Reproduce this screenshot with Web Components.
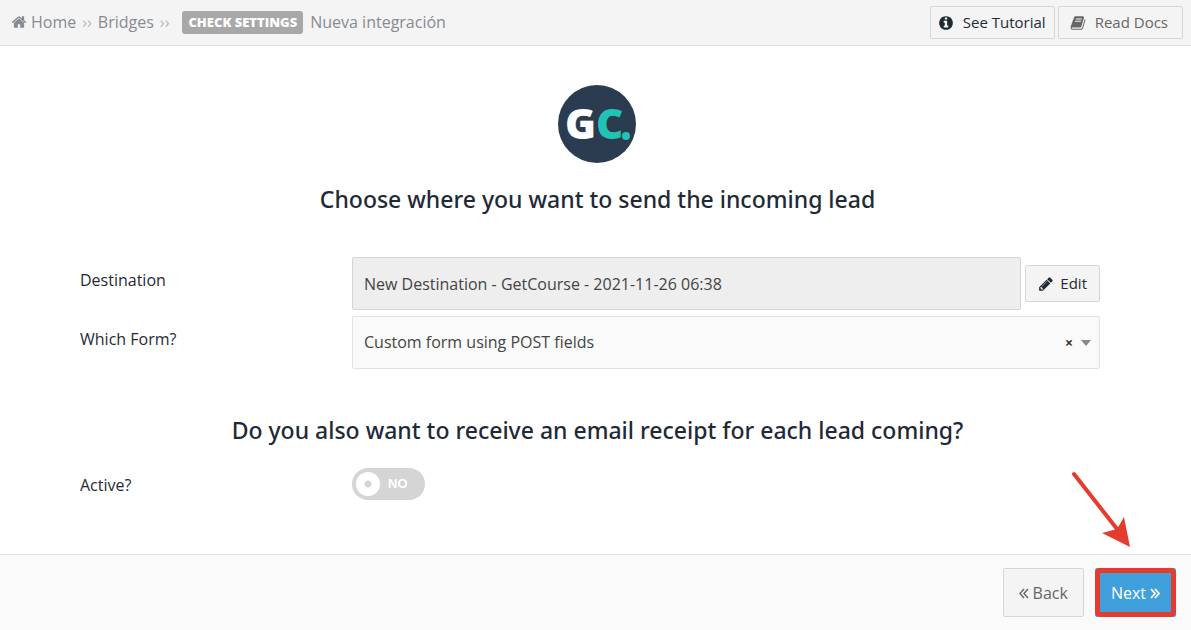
<!DOCTYPE html>
<html lang="en">
<head>
<meta charset="utf-8">
<meta name="viewport" content="width=device-width, initial-scale=1">
<title>Bridges - Nueva integración</title>
<style>
  body { margin: 0; background: #fff; color: #1f2a37; font: 16px/24px "Open Sans", "Noto Sans", sans-serif; }
</style>
</head>
<body>
<bridge-page>
  <crumb-trail slot="header"></crumb-trail>
  <ui-button slot="actions" icon="info" size="small">See Tutorial</ui-button>
  <ui-button slot="actions" icon="book" size="small" tone="muted">Read Docs</ui-button>

  <brand-logo></brand-logo>
  <section-title>Choose where you want to send the incoming lead</section-title>
  <destination-field></destination-field>
  <form-field></form-field>
  <section-title class="second">Do you also want to receive an email receipt for each lead coming?</section-title>
  <switch-field></switch-field>

  <ui-button slot="footer" icon="left" size="large" tone="muted">Back</ui-button>
  <callout-mark slot="footer"><ui-button icon="right" size="large" tone="primary">Next</ui-button></callout-mark>
</bridge-page>

<script>
const define = (name, html, setup) => customElements.define(name, class extends HTMLElement {
  connectedCallback() {
    if (this.shadowRoot) return;
    const t = document.createElement('template');
    t.innerHTML = html;
    this.attachShadow({ mode: 'open' }).append(t.content.cloneNode(true));
    if (setup) setup(this, this.shadowRoot);
  }
});

const glyphs = {
  home: 'M1472 992v480q0 26-19 45t-45 19h-384v-384h-256v384h-384q-26 0-45-19t-19-45v-480q0-1 .5-3t.5-3l575-474 575 474q1 2 1 6zm223-69l-62 74q-8 9-21 11h-3q-13 0-21-7l-692-577-692 577q-12 8-24 7-13-2-21-11l-62-74q-8-10-7-23.5t11-21.5l719-599q32-26 76-26t76 26l244 204v-195q0-14 9-23t23-9h192q14 0 23 9t9 23v408l219 182q10 8 11 21.5t-7 23.5z',
  info: 'M1152 1376v-160q0-14-9-23t-23-9h-96v-512q0-14-9-23t-23-9h-320q-14 0-23 9t-9 23v160q0 14 9 23t23 9h96v320h-96q-14 0-23 9t-9 23v160q0 14 9 23t23 9h448q14 0 23-9t9-23zm-128-896v-160q0-14-9-23t-23-9h-192q-14 0-23 9t-9 23v160q0 14 9 23t23 9h192q14 0 23-9t9-23zm640 416q0 209-103 385.5t-279.5 279.5-385.5 103-385.5-103-279.5-279.5-103-385.5 103-385.5 279.5-279.5 385.5-103 385.5 103 279.5 279.5 103 385.5z',
  pencil: 'M491 1536l91-91-235-235-91 91v107h128v128h107zm523-928q0-22-22-22-10 0-17 7l-542 542q-7 7-7 17 0 22 22 22 10 0 17-7l542-542q7-7 7-17zm-54-192l416 416-832 832h-416v-416zm683 96q0 53-37 90l-166 166-416-416 166-165q36-38 90-38 53 0 91 38l235 234q37 39 37 91z',
  book: 'M1703 478q40 57 18 129l-275 906q-19 64-76.5 107.5t-122.5 43.5h-923q-77 0-148.5-53.5t-99.5-131.5q-24-67-2-127 0-4 3-27t4-37q1-8-3-21.5t-3-19.5q2-11 8-21t16.5-23.5 16.5-23.5q23-38 45-91.5t30-91.5q3-10 .5-30t-.5-28q3-11 17-28t17-23q21-36 42-92t25-90q1-9-2.5-32t.5-28q4-13 22-30.5t22-22.5q19-26 42.5-84.5t27.5-96.5q1-8-3-25.5t-2-26.5q2-8 9-18t18-23 17-21q8-12 16.5-30.5t15-35 16-36 19.5-32 26.5-23.5 36-11.5 47.5 5.5l-1 3q38-9 51-9h761q74 0 114 56t18 130l-274 906q-36 119-71.5 153.5t-128.5 34.5h-869q-27 0-38 15-11 16-1 43 24 70 144 70h923q29 0 56-15.5t35-41.5l300-987q7-22 5-57 38 15 59 43zm-1064 2q-4 13 2 22.5t20 9.5h608q13 0 25.5-9.5t16.5-22.5l21-64q4-13-2-22.5t-20-9.5h-608q-13 0-25.5 9.5t-16.5 22.5zm-83 256q-4 13 2 22.5t20 9.5h608q13 0 25.5-9.5t16.5-22.5l21-64q4-13-2-22.5t-20-9.5h-608q-13 0-25.5 9.5t-16.5 22.5z'
};
const chevrons = {
  left: 'M5 1 1 5.5 5 10M9 1 5 5.5 9 10',
  right: 'M1 1 5 5.5 1 10M5 1 9 5.5 5 10'
};

define('ui-icon', `
  <style>
    :host { display: inline-flex; flex: none; }
    svg { display: block; }
  </style>`, (el, root) => {
  const name = el.getAttribute('name');
  root.innerHTML += chevrons[name]
    ? `<svg width="10" height="11" viewBox="0 0 10 11" fill="none" stroke="currentColor" stroke-width="${name === 'right' ? 1.8 : 1.4}" aria-hidden="true"><path d="${chevrons[name]}"/></svg>`
    : `<svg width="16" height="16" viewBox="0 0 1792 1792" fill="currentColor" aria-hidden="true"><path d="${glyphs[name]}"/></svg>`;
});

define('ui-button', `
  <style>
    :host { display: block; flex: none; }
    button {
      display: flex; align-items: center; box-sizing: border-box; margin: 0; cursor: pointer;
      background: #f4f4f4; border: 1px solid #d6d6d6; border-radius: 2px;
      color: #1f2a37; font: inherit; font-size: 15px; line-height: 21px;
    }
    :host([size="small"]) button { padding: 5px 8px 5px 7px; gap: 9px; height: 33px; }
    :host([size="medium"]) button { padding: 7px 12px; gap: 6px; height: 37px; }
    :host([size="large"]) button { padding: 13px 15px 11px; gap: 4px; height: 49px; font-size: 16px; }
    :host([size="small"][tone="muted"]) button { padding-left: 11px; padding-right: 14px; }
    :host([tone="muted"]) button { color: #666; }
    :host([tone="primary"]) button { background: #3fa0dc; border-color: #3fa0dc; color: #fff; }
    :host([icon="right"]) button { flex-direction: row-reverse; }
  </style>
  <button type="button"><slot></slot></button>`, (el, root) => {
  const icon = document.createElement('ui-icon');
  icon.setAttribute('name', el.getAttribute('icon'));
  root.querySelector('button').prepend(icon);
});

define('crumb-trail', `
  <style>
    :host { display: block; color: #868b92; }
    nav { display: flex; align-items: center; gap: 6px; padding-bottom: 2px; }
    a { display: flex; align-items: center; gap: 4px; color: inherit; text-decoration: none; }
    .sep { color: #b4b7bb; }
    .tag {
      margin: 2px 1px 0 7px; padding: 0 6px; background: #a8a8a8; color: #fff; border-radius: 3px;
      font-size: 13px; line-height: 23px; font-weight: 800;
    }
  </style>
  <nav aria-label="Breadcrumb">
    <a href="#home"><ui-icon name="home"></ui-icon>Home</a>
    <span class="sep">››</span>
    <a href="#bridges">Bridges</a>
    <span class="sep">››</span>
    <span class="tag">CHECK SETTINGS</span>
    <span>Nueva integración</span>
  </nav>`);

define('brand-logo', `
  <style>
    :host { display: block; }
    svg { display: block; margin: 0 auto; }
    text { font: 800 42px "Open Sans", sans-serif; }
  </style>
  <svg width="79" height="78" viewBox="0 0 79 78" role="img" aria-label="GetCourse">
    <circle cx="39" cy="39" r="39" fill="#2b3c50"/>
    <text x="7" y="54" fill="#fff">G<tspan fill="#22c3b4">C</tspan></text>
    <circle cx="68" cy="51" r="4" fill="#22c3b4"/>
  </svg>`);

define('section-title', `
  <style>
    :host { display: block; text-align: center; }
    h2 { margin: 0; font-family: "Noto Sans", "Open Sans", sans-serif; font-size: 23px; line-height: 32px; font-weight: 500; color: #1f2a37; }
  </style>
  <h2><slot></slot></h2>`);

const rowStyle = `
  :host { display: block; padding: 0 83px 0 68px; }
  .row { display: grid; grid-template-columns: 272px minmax(0, 1fr); }
  .row > label { padding-top: 11px; color: #1f2a37; }
  .box { box-sizing: border-box; height: 53px; border: 1px solid #d6d6d6; border-radius: 2px; font: inherit; color: #444; }
`;

define('destination-field', `
  <style>
    ${rowStyle}
    .group { display: flex; align-items: center; gap: 4px; }
    input { flex: 1; min-width: 0; margin: 0; padding: 0 11px; background: #eee; opacity: 1; }
  </style>
  <div class="row">
    <label for="destination">Destination</label>
    <div class="group">
      <input class="box" id="destination" type="text" readonly value="New Destination - GetCourse - 2021-11-26 06:38">
      <ui-button icon="pencil" size="medium">Edit</ui-button>
    </div>
  </div>`);

define('form-field', `
  <style>
    ${rowStyle}
    .box { display: flex; align-items: center; gap: 8px; padding-right: 8px; background: #fafafa; border-color: #e2e2e2; }
    select { flex: 1; align-self: stretch; min-width: 0; margin: 0; padding: 0 11px 2px; border: 0; appearance: none; background: none; font: inherit; color: inherit; }
    button { padding: 0; border: 0; background: none; color: #333; font: bold 14px/20px "Open Sans", sans-serif; cursor: pointer; }
    .caret { border: 5px solid transparent; border-top: 6px solid #888; border-bottom: 0; }
  </style>
  <div class="row">
    <label for="which">Which Form?</label>
    <div class="box">
      <select id="which"><option>Custom form using POST fields</option></select>
      <button type="button" aria-label="Clear">×</button>
      <span class="caret"></span>
    </div>
  </div>`, (el, root) => {
  root.querySelector('button').onclick = () => { root.querySelector('select').selectedIndex = -1; };
});

define('switch-field', `
  <style>
    ${rowStyle}
    .row > label { padding-top: 5px; }
    .switch { display: flex; align-items: center; box-sizing: border-box; width: 73px; height: 32px; padding: 4px; gap: 8px; border-radius: 16px; background: #d5d5d5; color: #fff; font: bold 13px/16px "Liberation Sans", Arial, sans-serif; }
    input { appearance: none; flex: none; width: 24px; height: 24px; margin: 0; border-radius: 50%; background: radial-gradient(circle, #d5d5d5 3px, #fff 4px); }
  </style>
  <div class="row">
    <label for="active">Active?</label>
    <div class="switch"><input id="active" type="checkbox" role="switch"><span>NO</span></div>
  </div>`);

define('callout-mark', `
  <style>
    :host { display: block; position: relative; }
    .frame { position: absolute; inset: 0; border: 5px solid #e53c2f; border-radius: 5px; pointer-events: none; }
    svg { position: absolute; right: 46px; bottom: 70px; pointer-events: none; }
  </style>
  <slot></slot>
  <div class="frame"></div>
  <svg width="59" height="77" viewBox="0 0 59 77" aria-hidden="true">
    <path d="M3 4 46 59" fill="none" stroke="#e53c2f" stroke-width="4" stroke-linecap="round"/>
    <path d="M59 77 53 47 46 59 31 63Z" fill="#e53c2f"/>
  </svg>`);

define('bridge-page', `
  <style>
    :host { display: flex; flex-direction: column; min-height: 100vh; }
    header { display: flex; align-items: center; justify-content: space-between; box-sizing: border-box; height: 46px; padding: 0 8px 0 11px; background: #f4f4f4; border-bottom: 1px solid #e0e0e0; }
    .actions { display: flex; gap: 3px; }
    main { flex: 1; padding: 39px 8px 24px 12px; }
    footer { display: flex; justify-content: flex-end; gap: 11px; padding: 13px 15px; background: #fafafa; border-top: 1px solid #e0e0e0; }
    ::slotted(section-title) { margin: 20px 0 42px; }
    ::slotted(section-title.second) { margin: 45px 0 22px; }
    ::slotted(form-field) { margin-top: 6px; }
  </style>
  <header><slot name="header"></slot><div class="actions"><slot name="actions"></slot></div></header>
  <main><slot></slot></main>
  <footer><slot name="footer"></slot></footer>`);
</script>
</body>
</html>
